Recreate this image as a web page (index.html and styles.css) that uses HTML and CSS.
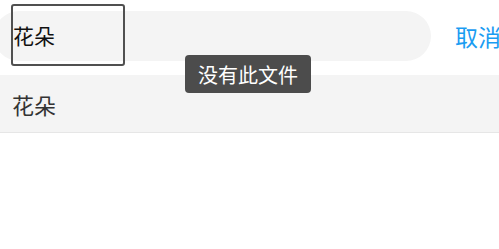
FILE: index.html
```html
<!DOCTYPE html>
<html lang="zh">
  <head>
    <meta charset="UTF-8" />
    <meta name="viewport" content="width=device-width, initial-scale=1.0" />
    <title>搜索</title>
    <link rel="stylesheet" href="styles.css">
  </head>
  <body>
    <div class="search-header">
      <div class="search-box">
        <input type="text" class="search-input" value="花朵" />
      </div>
      <button class="cancel-btn">取消</button>
    </div>

    <ul class="result-list">
      <li class="result-item">花朵</li>
    </ul>

    <div class="toast">没有此文件</div>
  </body>
</html>
```

FILE: styles.css
```css
* {
  margin: 0;
  padding: 0;
  box-sizing: border-box;
}

body {
  background-color: #fff;
  font-family: "Noto Sans CJK SC", "Noto Sans", sans-serif;
  overflow: hidden;
}

.search-header {
  display: flex;
  align-items: center;
  padding: 11px 0 14px;
}

.search-box {
  flex: 1;
  height: 50px;
  margin-left: -6px;
  border-radius: 25px;
  background-color: #f4f4f4;
  display: flex;
  align-items: center;
}

.search-input {
  width: 114px;
  height: 62px;
  margin-left: 17px;
  margin-top: -2px;
  border: 2px solid #505050;
  border-radius: 3px;
  background: transparent;
  outline: none;
  padding: 0;
  font-family: inherit;
  font-size: 21px;
  color: #111;
}

.cancel-btn {
  flex-shrink: 0;
  width: 48px;
  margin-left: 24px;
  margin-right: -4px;
  border: none;
  background: none;
  text-align: left;
  white-space: nowrap;
  font-family: inherit;
  font-size: 23px;
  line-height: 1;
  color: #1a9cf2;
  cursor: pointer;
}

.result-list {
  list-style: none;
}

.result-item {
  height: 58px;
  padding-left: 12px;
  display: flex;
  align-items: center;
  background-color: #f4f4f4;
  border-bottom: 1px solid #e6e6e6;
  font-size: 22px;
  color: #333;
}

.toast {
  position: absolute;
  left: 185px;
  top: 55px;
  height: 38px;
  padding: 0 13px;
  display: flex;
  align-items: center;
  border-radius: 4px;
  background-color: #4c4c4c;
  color: #fff;
  font-size: 20px;
}
```
